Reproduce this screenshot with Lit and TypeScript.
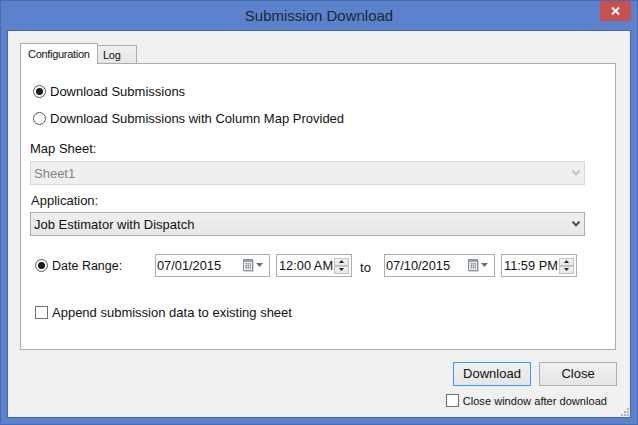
import { LitElement, html, css, svg } from "lit";
import { customElement } from "lit/decorators.js";

const chevron = svg`<svg class="chev" width="8" height="6" viewBox="0 0 8 6"><path d="M0.6 0.8 L4 4.4 L7.4 0.8" fill="none" stroke="currentColor" stroke-width="2"/></svg>`;

const calendar = svg`<svg class="cal" width="20" height="13" viewBox="0 0 20 13">
  <rect x="0.5" y="0.5" width="9" height="11" fill="#eef0f2" stroke="#8a8f96"/>
  <rect x="1" y="1" width="8" height="2" fill="#9aa0a8"/>
  <path d="M2 4.5h6M2 6.5h6M2 8.5h6M3.5 4v6M5.5 4v6M7.5 4v6" stroke="#a6abb2" stroke-width="1" fill="none"/>
  <path d="M1 12.5h9.5V2" stroke="#cfd2d6" fill="none"/>
  <path d="M13 4h7l-3.5 4z" fill="#5e6f8c"/>
</svg>`;

@customElement("app-root")
export class AppRoot extends LitElement {
  static styles = css`
    :host {
      display: flex;
      flex-direction: column;
      width: 638px;
      height: 425px;
      box-sizing: border-box;
      background: #5c82cc;
      border: 1px solid #4a6cb0;
      font-family: "Liberation Sans", Arial, sans-serif;
      font-size: 13px;
      color: #111;
      overflow: hidden;
    }
    .titlebar {
      height: 29px;
      flex: none;
      display: flex;
      align-items: center;
      justify-content: center;
      position: relative;
      font-size: 15px;
      color: #1c2636;
    }
    .close-x {
      position: absolute;
      top: 0;
      right: 6px;
      width: 31px;
      height: 20px;
      background: #c75050;
      display: flex;
      align-items: center;
      justify-content: center;
    }
    .client {
      flex: 1;
      margin: 0 6px 6px 6px;
      border: 1px solid #4668aa;
      background: #f0f0f0;
      position: relative;
      display: flex;
      flex-direction: column;
      padding: 12px 14px 0 12px;
      min-height: 0;
    }
    .tabs {
      display: flex;
      align-items: flex-end;
      height: 21px;
      position: relative;
      z-index: 1;
      margin-bottom: -1px;
    }
    .tab {
      box-sizing: border-box;
      border: 1px solid #acacac;
      font-size: 11px;
      letter-spacing: -0.3px;
      display: flex;
      align-items: center;
    }
    .tab.on {
      width: 78px;
      height: 21px;
      padding-left: 7px;
      background: #fff;
      border-bottom: none;
    }
    .tab.off {
      width: 40px;
      height: 19px;
      margin-left: -1px;
      padding-left: 5px;
      background: linear-gradient(#f0f0f0, #e5e5e5);
    }
    .pane {
      box-sizing: border-box;
      height: 287px;
      border: 1px solid #acacac;
      background: #fff;
      padding: 20px 30px 0 9px;
      display: flex;
      flex-direction: column;
    }
    .opt {
      display: flex;
      align-items: center;
      height: 15px;
      padding-left: 3px;
      gap: 4px;
    }
    .opt.second { margin-top: 12px; }
    .radio {
      box-sizing: border-box;
      width: 13px;
      height: 13px;
      border-radius: 50%;
      border: 1px solid #555;
      background: #fff;
      display: flex;
      align-items: center;
      justify-content: center;
      flex: none;
    }
    .radio.on::after {
      content: "";
      width: 7px;
      height: 7px;
      border-radius: 50%;
      background: #1a1a1a;
    }
    .check {
      box-sizing: border-box;
      width: 13px;
      height: 13px;
      border: 1px solid #707070;
      background: #fff;
      flex: none;
    }
    .label { height: 15px; line-height: 15px; }
    .label.map { margin-top: 15px; }
    .label.app { margin-top: 8px; padding-left: 1px; }
    .combo {
      box-sizing: border-box;
      height: 24px;
      margin-top: 4px;
      padding: 0 4px 0 3px;
      display: flex;
      align-items: center;
      justify-content: space-between;
      border: 1px solid #acacac;
      background: linear-gradient(#f0f0f0, #e5e5e5);
    }
    .combo.disabled {
      margin-top: 5px;
      border-color: #d9d9d9;
      background: #efefef;
      color: #838383;
    }
    .combo.disabled .chev { color: #bcbcbc; }
    .combo .chev { color: #444; }
    .range {
      display: flex;
      align-items: center;
      height: 23px;
      margin-top: 18px;
      padding-left: 5px;
    }
    .range-label { display: flex; align-items: center; gap: 4px; width: 120px; flex: none; font-size: 12.5px; }
    .field {
      box-sizing: border-box;
      height: 23px;
      border: 1px solid #abadb3;
      background: #fff;
      display: flex;
      align-items: center;
      flex: none;
      font-size: 12.8px;
    }
    .date { padding-left: 1px; justify-content: space-between; padding-right: 6px; }
    .date.a { width: 115px; }
    .date.b { width: 111px; }
    .time { width: 76px; padding-left: 2px; margin-left: 6px; justify-content: space-between; padding-right: 2px; }
    .spin { display: flex; flex-direction: column; gap: 0; width: 15px; flex: none; }
    .spin span {
      box-sizing: border-box;
      height: 8px;
      border: 1px solid #c4c4c4;
      background: linear-gradient(#f2f2f2, #e6e6e6);
      display: flex;
      align-items: center;
      justify-content: center;
    }
    .to { width: 32px; flex: none; padding: 4px 5px 0 0; box-sizing: border-box; text-align: center; }
    .append { margin-top: 28px; padding-left: 5px; }
    .footer {
      flex: 1;
      display: flex;
      flex-direction: column;
      align-items: flex-end;
      padding-top: 12px;
      margin-right: -1px;
    }
    .buttons { display: flex; gap: 8px; }
    .btn {
      box-sizing: border-box;
      width: 78px;
      height: 24px;
      padding-bottom: 1px;
      border: 1px solid #acacac;
      background: linear-gradient(#f0f0f0, #e5e5e5);
      display: flex;
      align-items: center;
      justify-content: center;
    }
    .btn.def { border-color: #3399ff; }
    .after {
      display: flex;
      align-items: center;
      gap: 4px;
      margin-top: 7px;
      font-size: 11.1px;
      height: 15px;
      padding-right: 10px;
    }
    .grip { position: absolute; right: 1px; bottom: 1px; }
  `;

  private spin() {
    return html`<div class="spin">
      <span><svg width="5" height="3" viewBox="0 0 5 3"><path d="M2.5 0L5 3H0z" fill="#222"/></svg></span>
      <span><svg width="5" height="3" viewBox="0 0 5 3"><path d="M0 0h5L2.5 3z" fill="#222"/></svg></span>
    </div>`;
  }

  render() {
    return html`
      <div class="titlebar">
        Submission Download
        <div class="close-x">
          <svg width="9" height="8" viewBox="0 0 9 8"><path d="M1 0.5L8 7.5M8 0.5L1 7.5" stroke="#fff" stroke-width="2" fill="none"/></svg>
        </div>
      </div>
      <div class="client">
        <div class="tabs">
          <div class="tab on">Configuration</div>
          <div class="tab off">Log</div>
        </div>
        <div class="pane">
          <div class="opt"><span class="radio on"></span>Download Submissions</div>
          <div class="opt second"><span class="radio"></span>Download Submissions with Column Map Provided</div>
          <div class="label map">Map Sheet:</div>
          <div class="combo disabled">Sheet1 ${chevron}</div>
          <div class="label app">Application:</div>
          <div class="combo">Job Estimator with Dispatch ${chevron}</div>
          <div class="range">
            <div class="range-label"><span class="radio on"></span>Date Range:</div>
            <div class="field date a">07/01/2015 ${calendar}</div>
            <div class="field time">12:00 AM ${this.spin()}</div>
            <div class="to">to</div>
            <div class="field date b">07/10/2015 ${calendar}</div>
            <div class="field time">11:59 PM ${this.spin()}</div>
          </div>
          <div class="opt append"><span class="check"></span>Append submission data to existing sheet</div>
        </div>
        <div class="footer">
          <div class="buttons">
            <div class="btn def">Download</div>
            <div class="btn">Close</div>
          </div>
          <div class="after"><span class="check"></span>Close window after download</div>
          <svg class="grip" width="9" height="9" viewBox="0 0 9 9" fill="#b4b4b4">
            <rect x="7" y="1" width="2" height="2"/><rect x="4" y="4" width="2" height="2"/><rect x="7" y="4" width="2" height="2"/>
            <rect x="1" y="7" width="2" height="2"/><rect x="4" y="7" width="2" height="2"/><rect x="7" y="7" width="2" height="2"/>
          </svg>
        </div>
      </div>
    `;
  }
}
